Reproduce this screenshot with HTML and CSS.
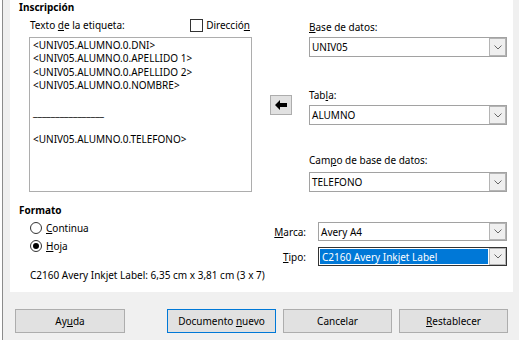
FILE: index.html
```html
<!DOCTYPE html>
<html lang="es">
<head>
  <meta charset="UTF-8" />
  <meta name="viewport" content="width=device-width, initial-scale=1.0" />
  <title>Etiquetas</title>
  <link rel="stylesheet" href="styles.css">
</head>
<body>
  <div class="dialog">
    <div class="panel">
      <div class="top">
        <div class="inscripcion">
          <h2 class="group-title">Inscripción</h2>
          <div class="label-row">
            <span>Texto <u>d</u>e la etiqueta:</span>
            <span class="check"><span class="checkbox"></span><span>Direcció<u>n</u></span></span>
          </div>
          <div class="label-text">
            <div>&lt;UNIV05.ALUMNO.0.DNI&gt;</div>
            <div>&lt;UNIV05.ALUMNO.0.APELLIDO 1&gt;</div>
            <div>&lt;UNIV05.ALUMNO.0.APELLIDO 2&gt;</div>
            <div>&lt;UNIV05.ALUMNO.0.NOMBRE&gt;</div>
            <div>&nbsp;</div>
            <div>________________</div>
            <div>&nbsp;</div>
            <div>&lt;UNIV05.ALUMNO.0.TELEFONO&gt;</div>
          </div>
        </div>

        <div class="insert-col">
          <button class="arrow-btn">
            <svg width="12" height="10" viewBox="0 0 12 10"><path d="M0 5 L5 0 L5 3 L12 3 L12 7 L5 7 L5 10 Z" fill="#000"/></svg>
          </button>
        </div>

        <div class="fields">
          <label class="field-label f-base"><u>B</u>ase de datos:</label>
          <div class="combo">
            <span class="combo-value">UNIV05</span>
            <span class="drop"><svg width="8" height="5" viewBox="0 0 8 5"><path d="M0.5 0.5 L4 4 L7.5 0.5" fill="none" stroke="#666" stroke-width="1"/></svg></span>
          </div>

          <label class="field-label f-tabla">Tab<u>l</u>a:</label>
          <div class="combo">
            <span class="combo-value">ALUMNO</span>
            <span class="drop"><svg width="8" height="5" viewBox="0 0 8 5"><path d="M0.5 0.5 L4 4 L7.5 0.5" fill="none" stroke="#666" stroke-width="1"/></svg></span>
          </div>

          <label class="field-label f-campo">Cam<u>p</u>o de base de datos:</label>
          <div class="combo combo-campo">
            <span class="combo-value">TELEFONO</span>
            <span class="drop"><svg width="8" height="5" viewBox="0 0 8 5"><path d="M0.5 0.5 L4 4 L7.5 0.5" fill="none" stroke="#666" stroke-width="1"/></svg></span>
          </div>
        </div>
      </div>

      <div class="bottom">
        <div class="formato">
          <h2 class="group-title">Formato</h2>
          <div class="radio-row first"><span class="radio"></span><span><u>C</u>ontinua</span></div>
          <div class="radio-row"><span class="radio on"></span><span><u>H</u>oja</span></div>
        </div>
        <div class="marca">
          <label class="row-label"><span><u>M</u>arca:</span></label>
          <div class="combo combo-sm">
            <span class="combo-value">Avery A4</span>
            <span class="drop"><svg width="8" height="5" viewBox="0 0 8 5"><path d="M0.5 0.5 L4 4 L7.5 0.5" fill="none" stroke="#666" stroke-width="1"/></svg></span>
          </div>
          <label class="row-label"><span><u>T</u>ipo:</span></label>
          <div class="combo combo-sm combo-focus">
            <span class="combo-value selected">C2160 Avery Inkjet Label</span>
            <span class="drop"><svg width="8" height="5" viewBox="0 0 8 5"><path d="M0.5 0.5 L4 4 L7.5 0.5" fill="none" stroke="#666" stroke-width="1"/></svg></span>
          </div>
        </div>
      </div>

      <div class="info">C2160 Avery Inkjet Label: 6,35 cm x 3,81 cm (3 x 7)</div>
    </div>

    <div class="buttons">
      <button class="btn btn-help">Ay<u>u</u>da</button>
      <button class="btn btn-default">Documento <u>n</u>uevo</button>
      <button class="btn">Cancelar</button>
      <button class="btn"><u>R</u>establecer</button>
    </div>
  </div>
</body>
</html>
```

FILE: styles.css
```css
body {
  margin: 0;
  background: #fff;
  font-family: 'Segoe UI', 'Noto Sans', sans-serif;
  font-size: 10px;
  color: #000;
}
u {
  text-underline-offset: 1px;
}
.dialog {
  margin-left: 2px;
  height: 340px;
  border-left: 1px solid #8c8c8c;
  background: #f0f0f0;
}
.panel {
  margin-left: 7px;
  width: 503px;
  height: 292px;
  box-sizing: border-box;
  padding-left: 9px;
  background: #fff;
}
.top {
  display: flex;
}
.group-title {
  margin: 0;
  font-size: 10px;
  font-weight: bold;
  line-height: 14px;
}
.inscripcion {
  width: 233px;
}
.label-row {
  display: flex;
  justify-content: space-between;
  align-items: center;
  margin-top: 4px;
  height: 14px;
  padding-left: 11px;
  padding-right: 2px;
  line-height: 14px;
}
.check {
  display: flex;
  align-items: center;
  gap: 3px;
}
.checkbox {
  width: 11px;
  height: 11px;
  border: 1px solid #333;
  background: #fff;
}
.label-text {
  margin-top: 5px;
  margin-left: 10px;
  width: 223px;
  height: 155px;
  box-sizing: border-box;
  border: 1px solid #adadad;
  padding: 1px 3px;
  line-height: 13.4px;
  white-space: nowrap;
}
.insert-col {
  width: 57px;
}
.arrow-btn {
  display: flex;
  align-items: center;
  justify-content: center;
  margin: 95px 0 0 18px;
  width: 22px;
  height: 20px;
  padding: 0;
  border: 1px solid #adadad;
  background: #e1e1e1;
}
.fields {
  display: flex;
  flex-direction: column;
  width: 198px;
}
.field-label {
  display: block;
  line-height: 14px;
}
.f-base {
  margin-top: 20px;
}
.f-tabla {
  margin-top: 31px;
}
.f-campo {
  margin-top: 28px;
}
.combo {
  display: flex;
  align-items: stretch;
  margin-top: 3px;
  height: 20px;
  box-sizing: border-box;
  border: 1px solid #a2a2a2;
  background: #fff;
}
.combo-campo {
  margin-top: 5px;
}
.combo-value {
  flex: 1;
  display: flex;
  align-items: center;
  padding-left: 2px;
  white-space: nowrap;
}
.drop {
  display: flex;
  align-items: center;
  justify-content: center;
  width: 15px;
  border: 1px solid #b4b4b4;
  background: #efefef;
}
.bottom {
  display: flex;
  margin-top: 11px;
}
.formato {
  width: 241px;
}
.radio-row {
  display: flex;
  align-items: center;
  gap: 4px;
  height: 18px;
  padding-left: 11px;
}
.radio-row.first {
  margin-top: 2px;
}
.radio {
  position: relative;
  width: 10px;
  height: 10px;
  border: 1px solid #333;
  border-radius: 50%;
  background: #fff;
}
.radio.on::after {
  content: "";
  position: absolute;
  left: 2px;
  top: 2px;
  width: 6px;
  height: 6px;
  border-radius: 50%;
  background: #000;
}
.marca {
  display: grid;
  grid-template-columns: 46px 189px;
  column-gap: 12px;
  row-gap: 6px;
  margin-top: 19px;
  align-self: flex-start;
}
.row-label {
  display: flex;
  align-items: center;
  justify-content: flex-end;
}
.combo-sm {
  margin-top: 0;
  height: 19px;
}
.combo-focus {
  border-color: #333;
}
.combo-value.selected {
  margin: 1px;
  background: #0078d7;
  color: #fff;
}
.info {
  margin-top: 2px;
  padding-left: 11px;
  line-height: 14px;
  white-space: nowrap;
}
.buttons {
  display: flex;
  gap: 7px;
  margin-top: 17px;
  padding-left: 12px;
}
.btn {
  width: 109px;
  height: 24px;
  padding: 0;
  border: 1px solid #adadad;
  background: #e1e1e1;
  font-family: inherit;
  font-size: 10px;
  color: #000;
}
.btn-help {
  width: 110px;
  margin-right: 35px;
}
.btn-default {
  border-color: #0078d7;
}
```
